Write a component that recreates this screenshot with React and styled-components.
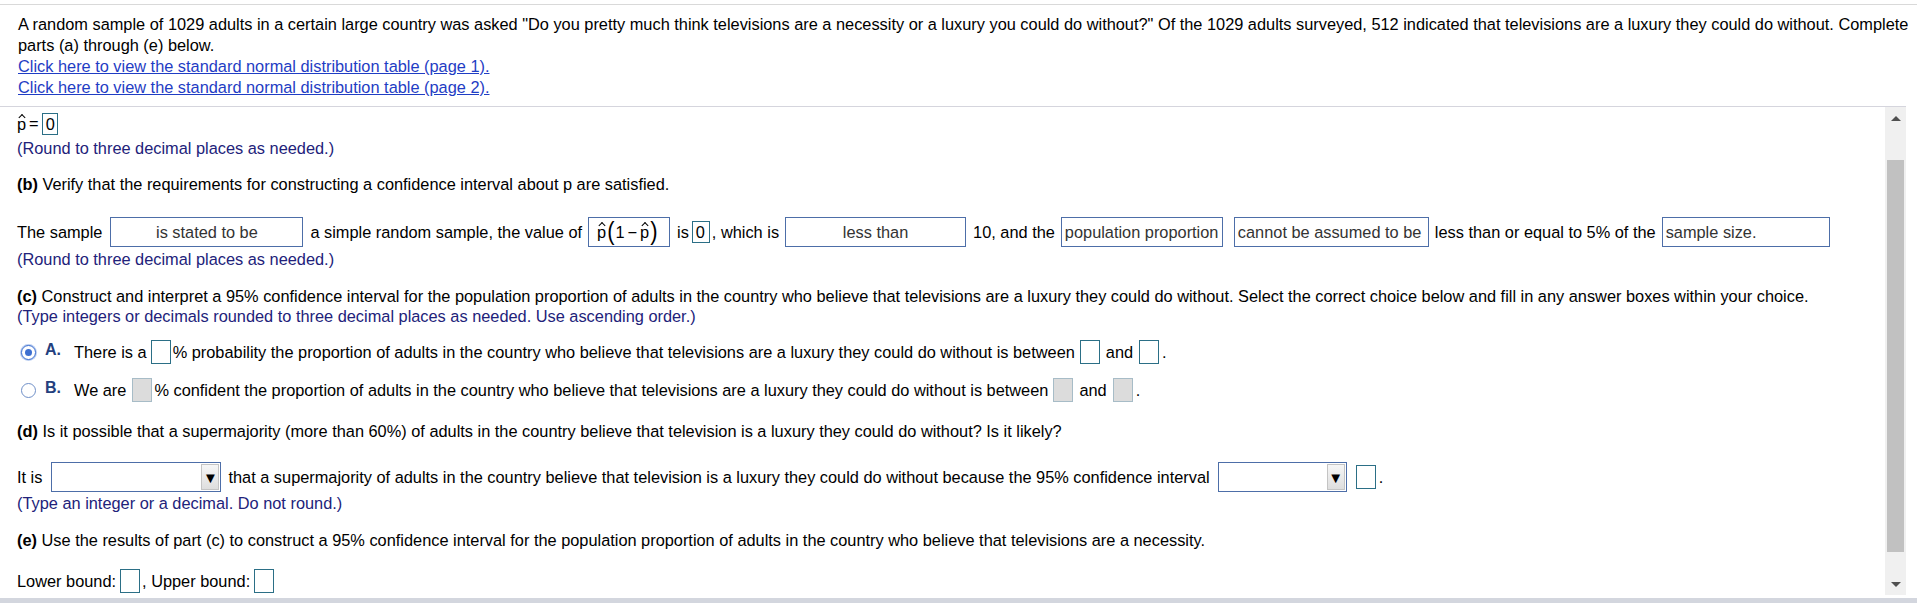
import React from 'react';
import styled, { createGlobalStyle } from 'styled-components';

const GlobalStyle = createGlobalStyle`
  html, body {
    margin: 0;
    padding: 0;
    background: #fff;
  }
  body {
    font-family: "Liberation Sans", Arial, sans-serif;
    font-size: 16.35px;
    color: #000;
  }
`;

const Page = styled.div`
  width: 1917px;
  height: 603px;
  display: flex;
  flex-direction: column;
  overflow: hidden;
`;

const TopRule = styled.div`
  margin-top: 4px;
  border-top: 1px solid #d9d9d9;
`;

const Intro = styled.div`
  padding: 9px 0 8px 18px;
  line-height: 21px;
  white-space: nowrap;
`;

const Link = styled.a`
  color: #1f3dc4;
  text-decoration: underline;
  cursor: pointer;
  display: inline-block;
`;

const Panel = styled.div`
  flex: 1;
  display: flex;
  margin-right: 11px;
  border-top: 1px solid #d5d5dd;
  min-height: 0;
`;

const Content = styled.div`
  flex: 1;
  padding-left: 17px;
  overflow: hidden;
`;

const Scrollbar = styled.div`
  width: 21px;
  margin-bottom: 3px;
  background: #f0f0f0;
  display: flex;
  flex-direction: column;
  align-items: center;
`;

const Arrow = styled.div`
  height: 22px;
  width: 100%;
  display: flex;
  align-items: center;
  justify-content: center;
  &::after {
    content: "";
    border-left: 5px solid transparent;
    border-right: 5px solid transparent;
    ${p => (p.$down ? 'border-top: 5px solid #505050;' : 'border-bottom: 5px solid #505050;')}
  }
`;

const Thumb = styled.div`
  width: 17px;
  margin-top: 31px;
  height: 392px;
  background: #c1c1c1;
`;

const Spacer = styled.div`
  flex: 1;
`;

const BottomBar = styled.div`
  height: 5px;
  background: #d3d6de;
`;

const Line = styled.div`
  line-height: 20px;
  margin-top: ${p => p.$mt || 0}px;
  white-space: nowrap;
`;

const Note = styled(Line)`
  color: #22227a;
`;

const Row = styled.div`
  display: flex;
  align-items: center;
  height: ${p => p.$h || 24}px;
  margin-top: ${p => p.$mt || 0}px;
  white-space: nowrap;
`;

const Part = styled.b`
  font-weight: bold;
`;

const Hat = styled.span`
  position: relative;
  display: inline-block;
  line-height: 20px;
  &::before {
    content: "";
    position: absolute;
    left: 50%;
    top: 1px;
    width: 4px;
    height: 4px;
    border-left: 1.3px solid #000;
    border-top: 1.3px solid #000;
    transform: translateX(-50%) rotate(45deg);
  }
`;

const Eq = styled.span`
  margin: 0 3px 0 3px;
`;

const AnswerBox = styled.span`
  display: inline-block;
  box-sizing: border-box;
  width: ${p => p.$w || 20}px;
  height: ${p => p.$h || 24}px;
  line-height: ${p => (p.$h || 24) - 2}px;
  border: 1px solid ${p => (p.$disabled ? '#a7bcc7' : '#2b6f86')};
  background: ${p => (p.$disabled ? '#dcdcdc' : '#fff')};
  margin: 0 ${p => p.$mr ?? 4}px 0 ${p => p.$ml ?? 4}px;
  padding-left: 3px;
  flex-shrink: 0;
`;

const Select = styled.span`
  display: inline-flex;
  align-items: center;
  justify-content: ${p => (p.$center ? 'center' : 'flex-start')};
  box-sizing: border-box;
  width: ${p => p.$w}px;
  height: 30px;
  border: 1px solid #4d6ea8;
  padding: 0 3px;
  color: #333;
  margin: 0 ${p => p.$mr ?? 6}px 0 ${p => p.$ml ?? 6}px;
  flex-shrink: 0;
`;

const MathBox = styled(Select)`
  color: #000;
  padding-left: 8px;
`;

const Paren = styled.span`
  display: inline-block;
  font-size: 22px;
  line-height: 20px;
  transform: scaleY(1.15);
  margin: 0 1px;
`;

const Minus = styled.span`
  margin: 0 3px;
`;

const Dropdown = styled.span`
  display: inline-flex;
  justify-content: flex-end;
  align-items: center;
  box-sizing: border-box;
  width: ${p => p.$w}px;
  height: 30px;
  border: 1px solid #4d6ea8;
  padding: 1px;
  margin: 0 ${p => p.$mr ?? 6}px 0 ${p => p.$ml ?? 6}px;
  flex-shrink: 0;
`;

const DropButton = styled.span`
  width: 18px;
  height: 26px;
  box-sizing: border-box;
  border: 1px solid #c4c4c4;
  background: linear-gradient(#f6f6f6, #dedede);
  display: flex;
  align-items: center;
  justify-content: center;
  font-size: 15px;
  color: #000;
`;

const Radio = styled.span`
  width: 15px;
  height: 15px;
  box-sizing: border-box;
  border-radius: 50%;
  border: 1px solid ${p => (p.$checked ? '#3d6fd0' : '#6f8fc8')};
  display: inline-flex;
  align-items: center;
  justify-content: center;
  margin: 0 9px 0 4px;
  background: #fff;
  box-shadow: ${p => (p.$checked ? '0 0 0 1px #b9cdf0' : 'none')};
  &::after {
    content: "";
    width: 7px;
    height: 7px;
    border-radius: 50%;
    background: ${p => (p.$checked ? '#3d6fd0' : 'transparent')};
  }
`;

const Letter = styled.span`
  font-weight: bold;
  font-size: 16px;
  color: #243f7e;
  margin-right: 13px;
  position: relative;
  top: -2px;
`;

function PHat() {
  return <Hat>p</Hat>;
}

export default function App() {
  return (
    <>
      <GlobalStyle />
      <Page>
        <TopRule />
        <Intro>
          A random sample of 1029 adults in a certain large country was asked "Do you pretty much think televisions are a necessity or a luxury you could do without?" Of the 1029 adults surveyed, 512 indicated that televisions are a luxury they could do without. Complete
          <br />
          parts (a) through (e) below.
          <br />
          <Link>Click here to view the standard normal distribution table (page 1).</Link>
          <br />
          <Link>Click here to view the standard normal distribution table (page 2).</Link>
        </Intro>
        <Panel>
          <Content>
            <Row $mt={5} $h={23}>
              <PHat />
              <Eq>=</Eq>
              <AnswerBox $w={16} $h={22} $ml={0} $mr={0}>0</AnswerBox>
            </Row>
            <Note $mt={3}>(Round to three decimal places as needed.)</Note>

            <Line $mt={16}>
              <Part>(b)</Part> Verify that the requirements for constructing a confidence interval about p are satisfied.
            </Line>

            <Row $h={30} $mt={23}>
              The sample
              <Select $w={193} $center $ml={8} $mr={7}>is stated to be</Select>
              a simple random sample, the value of
              <MathBox $w={82} $ml={6} $mr={7}>
                <PHat />
                <Paren>(</Paren>1<Minus>−</Minus><PHat />
                <Paren>)</Paren>
              </MathBox>
              is
              <AnswerBox $w={18} $h={22} $ml={3} $mr={2}>0</AnswerBox>
              , which is
              <Select $w={181} $center $ml={6} $mr={7}>less than</Select>
              10, and the
              <Select $w={162} $ml={6} $mr={11}>population proportion</Select>
              <Select $w={195} $ml={0} $mr={6}>cannot be assumed to be</Select>
              less than or equal to 5% of the
              <Select $w={168} $ml={6}>sample size.</Select>
            </Row>
            <Note $mt={2}>(Round to three decimal places as needed.)</Note>

            <Line $mt={17}>
              <Part>(c)</Part> Construct and interpret a 95% confidence interval for the population proportion of adults in the country who believe that televisions are a luxury they could do without. Select the correct choice below and fill in any answer boxes within your choice.
            </Line>
            <Note>(Type integers or decimals rounded to three decimal places as needed. Use ascending order.)</Note>

            <Row $mt={14}>
              <Radio $checked />
              <Letter>A.</Letter>
              There is a
              <AnswerBox $ml={4} $mr={2} />
              % probability the proportion of adults in the country who believe that televisions are a luxury they could do without is between
              <AnswerBox $ml={5} $mr={6} />
              and
              <AnswerBox $ml={6} $mr={3} />
              .
            </Row>
            <Row $mt={14}>
              <Radio />
              <Letter>B.</Letter>
              We are
              <AnswerBox $disabled $ml={6} $mr={2} />
              % confident the proportion of adults in the country who believe that televisions are a luxury they could do without is between
              <AnswerBox $disabled $ml={5} $mr={6} />
              and
              <AnswerBox $disabled $ml={6} $mr={3} />
              .
            </Row>

            <Line $mt={19}>
              <Part>(d)</Part> Is it possible that a supermajority (more than 60%) of adults in the country believe that television is a luxury they could do without? Is it likely?
            </Line>
            <Row $h={30} $mt={21}>
              It is
              <Dropdown $w={170} $ml={9} $mr={7}>
                <DropButton>▼</DropButton>
              </Dropdown>
              that a supermajority of adults in the country believe that television is a luxury they could do without because the 95% confidence interval
              <Dropdown $w={129} $ml={8} $mr={9}>
                <DropButton>▼</DropButton>
              </Dropdown>
              <AnswerBox $ml={0} $mr={3} />
              .
            </Row>
            <Note $mt={1}>(Type an integer or a decimal. Do not round.)</Note>

            <Line $mt={17}>
              <Part>(e)</Part> Use the results of part (c) to construct a 95% confidence interval for the population proportion of adults in the country who believe that televisions are a necessity.
            </Line>
            <Row $mt={19}>
              Lower bound:
              <AnswerBox $ml={4} $mr={2} />
              , Upper bound:
              <AnswerBox $ml={4} $mr={2} />
            </Row>
          </Content>
          <Scrollbar>
            <Arrow />
            <Thumb />
            <Spacer />
            <Arrow $down />
          </Scrollbar>
        </Panel>
        <BottomBar />
      </Page>
    </>
  );
}
